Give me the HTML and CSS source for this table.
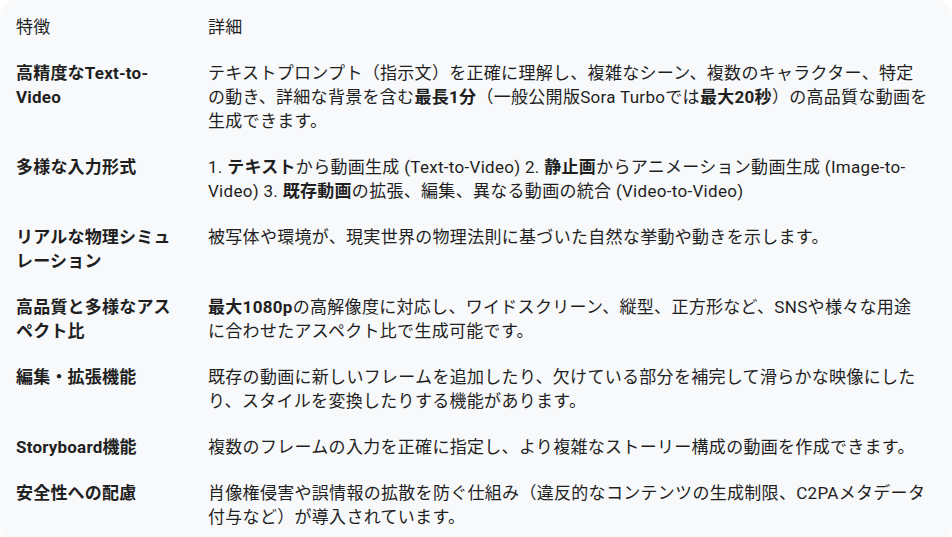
FILE: index.html
```html
<!DOCTYPE html>
<html lang="ja">
<head>
    <meta charset="UTF-8">
    <meta name="viewport" content="width=device-width, initial-scale=1.0">
    <title>Sora 特徴</title>
    <link rel="stylesheet" href="styles.css">
</head>
<body>
    <div class="card">
        <table class="features">
            <colgroup>
                <col class="col-name">
                <col class="col-detail">
            </colgroup>
            <thead>
                <tr>
                    <th>特徴</th>
                    <th>詳細</th>
                </tr>
            </thead>
            <tbody>
                <tr>
                    <td class="name">高精度なText-to-Video</td>
                    <td>テキストプロンプト（指示文）を正確に理解し、複雑なシーン、複数のキャラクター、特定<br>の動き、詳細な背景を含む<b>最長1分</b>（一般公開版Sora Turboでは<b>最大20秒</b>）の高品質な動画を<br>生成できます。</td>
                </tr>
                <tr>
                    <td class="name">多様な入力形式</td>
                    <td>1. <b>テキスト</b>から動画生成 (Text-to-Video) 2. <b>静止画</b>からアニメーション動画生成 (Image-to-<br>Video) 3. <b>既存動画</b>の拡張、編集、異なる動画の統合 (Video-to-Video)</td>
                </tr>
                <tr>
                    <td class="name">リアルな物理シミュレーション</td>
                    <td>被写体や環境が、現実世界の物理法則に基づいた自然な挙動や動きを示します。</td>
                </tr>
                <tr>
                    <td class="name">高品質と多様なアスペクト比</td>
                    <td><b>最大1080p</b>の高解像度に対応し、ワイドスクリーン、縦型、正方形など、SNSや様々な用途<br>に合わせたアスペクト比で生成可能です。</td>
                </tr>
                <tr>
                    <td class="name">編集・拡張機能</td>
                    <td>既存の動画に新しいフレームを追加したり、欠けている部分を補完して滑らかな映像にした<br>り、スタイルを変換したりする機能があります。</td>
                </tr>
                <tr>
                    <td class="name">Storyboard機能</td>
                    <td>複数のフレームの入力を正確に指定し、より複雑なストーリー構成の動画を作成できます。</td>
                </tr>
                <tr>
                    <td class="name">安全性への配慮</td>
                    <td>肖像権侵害や誤情報の拡散を防ぐ仕組み（違反的なコンテンツの生成制限、C2PAメタデータ<br>付与など）が導入されています。</td>
                </tr>
            </tbody>
        </table>
    </div>
</body>
</html>
```

FILE: styles.css
```css
body {
    margin: 0;
    padding: 0;
    background-color: #ffffff;
    font-family: "Roboto", "Noto Sans CJK JP", sans-serif;
    color: #1f1f1f;
}
.card {
    background-color: #f8f9fb;
    border-radius: 16px;
    padding: 4px 0 4px 0;
    width: 952px;
}
.features {
    border-collapse: collapse;
    table-layout: fixed;
    width: 951px;
    font-size: 17px;
    line-height: 24px;
    letter-spacing: 0.3px;
}
.col-name {
    width: 192px;
}
.features th {
    font-weight: normal;
    text-align: left;
    padding: 11px 16px;
}
.features td {
    vertical-align: top;
    padding: 11px 16px;
}
.features td.name {
    font-weight: bold;
    letter-spacing: 0.2px;
}
.features b {
    font-weight: bold;
}
```
